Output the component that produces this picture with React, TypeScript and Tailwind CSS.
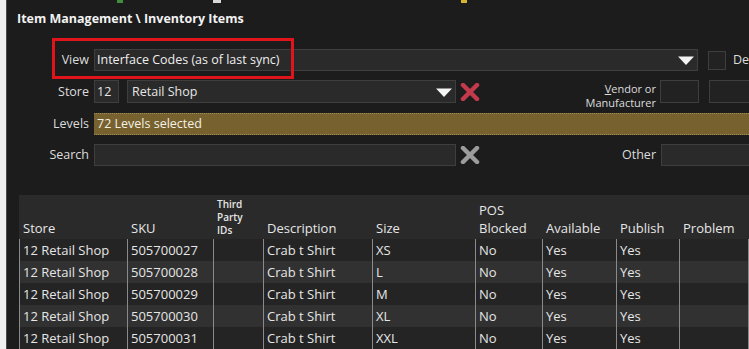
import React from 'react';

const columns = [
  { key: 'store', label: ['Store'], w: 'w-[108px]' },
  { key: 'sku', label: ['SKU'], w: 'w-[86px]' },
  { key: 'third', label: ['Third', 'Party', 'IDs'], w: 'w-[50px]', small: true },
  { key: 'desc', label: ['Description'], w: 'w-[109px]' },
  { key: 'size', label: ['Size'], w: 'w-[103px]' },
  { key: 'pos', label: ['POS', 'Blocked'], w: 'w-[67px]' },
  { key: 'avail', label: ['Available'], w: 'w-[74px]' },
  { key: 'publish', label: ['Publish'], w: 'w-[63px]' },
  { key: 'problem', label: ['Problem'], w: 'w-[69px]' },
];

const rows = [
  { store: '12 Retail Shop', sku: '505700027', third: '', desc: 'Crab t Shirt', size: 'XS', pos: 'No', avail: 'Yes', publish: 'Yes', problem: '' },
  { store: '12 Retail Shop', sku: '505700028', third: '', desc: 'Crab t Shirt', size: 'L', pos: 'No', avail: 'Yes', publish: 'Yes', problem: '' },
  { store: '12 Retail Shop', sku: '505700029', third: '', desc: 'Crab t Shirt', size: 'M', pos: 'No', avail: 'Yes', publish: 'Yes', problem: '' },
  { store: '12 Retail Shop', sku: '505700030', third: '', desc: 'Crab t Shirt', size: 'XL', pos: 'No', avail: 'Yes', publish: 'Yes', problem: '' },
  { store: '12 Retail Shop', sku: '505700031', third: '', desc: 'Crab t Shirt', size: 'XXL', pos: 'No', avail: 'Yes', publish: 'Yes', problem: '' },
];

function Arrow() {
  return (
    <svg width="18" height="11" viewBox="0 0 18 11" className="shrink-0">
      <path d="M1 1.5 L17 1.5 L9 10 Z" fill="#f4f4f4" />
    </svg>
  );
}

function XMark({ color }: { color: string }) {
  return (
    <svg width="20" height="18" viewBox="0 0 20 18" className="shrink-0">
      <path d="M3 2 L17 16 M17 2 L3 16" stroke={color} strokeWidth="4.5" strokeLinecap="round" />
    </svg>
  );
}

function Label({ children }: { children: React.ReactNode }) {
  return <div className="w-[87px] shrink-0 pr-[5px] pt-[1px] text-right text-[12.5px] text-[#dcdcdc]">{children}</div>;
}

export default function App() {
  return (
    <div
      className="flex h-[349px] w-[749px] overflow-hidden bg-[#1c1c1c] text-[#e6e6e6]"
      style={{ fontFamily: '"Open Sans", "Noto Sans", sans-serif' }}
    >
      <div className="w-[6px] shrink-0 bg-[#efefef]" />
      <div className="relative flex min-w-0 flex-1 flex-col overflow-hidden border-l border-[#4a4a4a]">
        {/* toolbar remnants */}
        <div className="flex h-[4px] items-start gap-[90px] pl-[110px]">
          <div className="h-[3px] w-[6px] bg-[#3f8f3f]" />
          <div className="h-[3px] w-[8px] bg-[#d8d8d8]" />
          <div className="ml-[150px] h-[3px] w-[6px] bg-[#d6b532]" />
        </div>

        <div className="pl-[10px] pt-[7px] text-[12.5px] font-bold leading-[18px] text-[#f2f2f2]">
          Item Management \ Inventory Items
        </div>

        {/* View */}
        <div className="mt-[21px] flex h-[22px] items-center">
          <Label>View</Label>
          <div className="flex h-[22px] w-[604px] shrink-0 items-center justify-between border border-[#3e3e3e] bg-[#2a2a2a] pl-[2px] pr-[2px]">
            <span className="text-[12.5px] text-[#eeeeee]">Interface Codes (as of last sync)</span>
            <Arrow />
          </div>
          <div className="ml-[10px] h-[19px] w-[18px] shrink-0 border border-[#3e3e3e] bg-[#222]" />
          <span className="ml-[7px] w-[16px] shrink-0 overflow-hidden whitespace-nowrap text-[12.5px] text-[#dcdcdc]">De</span>
        </div>

        {/* Store */}
        <div className="mt-[9px] flex h-[23px] items-center">
          <Label>Store</Label>
          <div className="flex h-[23px] w-[25px] shrink-0 items-center border border-[#3e3e3e] bg-[#2a2a2a] pl-[2px] pt-[1px] text-[12.5px]">12</div>
          <div className="ml-[8px] flex h-[23px] w-[329px] shrink-0 items-center justify-between border border-[#3e3e3e] bg-[#2a2a2a] pl-[4px] pr-[2px] pt-[1px] text-[12.5px]">
            <span>Retail Shop</span>
            <Arrow />
          </div>
          <div className="ml-[4px]">
            <XMark color="#c43a4d" />
          </div>
          <div className="w-[176px] shrink-0 pt-[8px] text-right text-[11px] leading-[14px] text-[#dcdcdc]">
            <div>
              <span className="underline">V</span>endor or
            </div>
            <div>Manufacturer</div>
          </div>
          <div className="ml-[4px] h-[23px] w-[39px] shrink-0 border border-[#3e3e3e] bg-[#222]" />
          <div className="ml-[10px] h-[23px] w-[60px] shrink-0 border border-[#3e3e3e] bg-[#222]" />
        </div>

        {/* Levels */}
        <div className="mt-[10px] flex h-[22px] items-center">
          <Label>Levels</Label>
          <div className="flex h-[22px] flex-1 items-center border-y border-dotted border-[#a08c55] bg-[#77622f] pl-[3px] text-[12.5px] text-[#f4f0e4]">
            72 Levels selected
          </div>
        </div>

        {/* Search */}
        <div className="mt-[9px] flex h-[22px] items-center">
          <Label>Search</Label>
          <div className="h-[22px] w-[362px] shrink-0 border border-[#3e3e3e] bg-[#2a2a2a]" />
          <div className="ml-[4px]">
            <XMark color="#9c9c9c" />
          </div>
          <div className="w-[176px] shrink-0 text-right text-[12.5px] text-[#dcdcdc]">Other</div>
          <div className="ml-[5px] h-[22px] w-[100px] shrink-0 border border-[#3e3e3e] bg-[#2a2a2a]" />
        </div>

        {/* Table */}
        <div className="ml-[12px] mt-[29px] flex-1 bg-[#262626] text-[13px]">
          <div className="flex h-[44px] bg-[#2a2a2a]">
            {columns.map((c) => (
              <div
                key={c.key}
                className={`${c.w} flex shrink-0 flex-col justify-end pb-[2px] pl-[4px] ${
                  c.small ? 'text-[10px] font-semibold leading-[13px]' : 'leading-[18px]'
                }`}
              >
                {c.label.map((l) => (
                  <span key={l}>{l}</span>
                ))}
              </div>
            ))}
          </div>
          {rows.map((r, i) => (
            <div key={r.sku} className={`flex h-[22px] ${i % 2 === 0 ? 'bg-[#242424]' : 'bg-[#313131]'}`}>
              {columns.map((c) => (
                <div
                  key={c.key}
                  className={`${c.w} flex shrink-0 items-center border-l border-[#8a8a8a] pl-[3px] leading-[22px]`}
                >
                  {(r as Record<string, string>)[c.key]}
                </div>
              ))}
              <div className="w-[40px] shrink-0 border-l border-[#8a8a8a]" />
            </div>
          ))}
        </div>

        {/* annotation box */}
        <div className="pointer-events-none absolute left-[45px] top-[38px] h-[41px] w-[242px] border-[3px] border-[#e0141b]" />
      </div>
    </div>
  );
}
